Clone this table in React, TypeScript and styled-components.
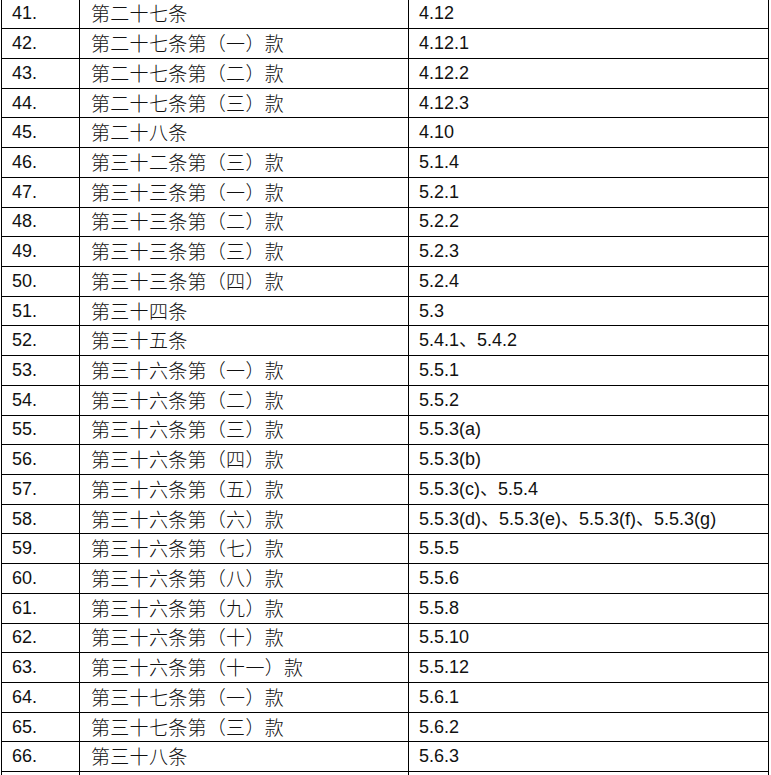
import React from "react";
import styled, { createGlobalStyle } from "styled-components";

const rows: [string, string, string][] = [
  ["41.", "第二十七条", "4.12"],
  ["42.", "第二十七条第（一）款", "4.12.1"],
  ["43.", "第二十七条第（二）款", "4.12.2"],
  ["44.", "第二十七条第（三）款", "4.12.3"],
  ["45.", "第二十八条", "4.10"],
  ["46.", "第三十二条第（三）款", "5.1.4"],
  ["47.", "第三十三条第（一）款", "5.2.1"],
  ["48.", "第三十三条第（二）款", "5.2.2"],
  ["49.", "第三十三条第（三）款", "5.2.3"],
  ["50.", "第三十三条第（四）款", "5.2.4"],
  ["51.", "第三十四条", "5.3"],
  ["52.", "第三十五条", "5.4.1、5.4.2"],
  ["53.", "第三十六条第（一）款", "5.5.1"],
  ["54.", "第三十六条第（二）款", "5.5.2"],
  ["55.", "第三十六条第（三）款", "5.5.3(a)"],
  ["56.", "第三十六条第（四）款", "5.5.3(b)"],
  ["57.", "第三十六条第（五）款", "5.5.3(c)、5.5.4"],
  ["58.", "第三十六条第（六）款", "5.5.3(d)、5.5.3(e)、5.5.3(f)、5.5.3(g)"],
  ["59.", "第三十六条第（七）款", "5.5.5"],
  ["60.", "第三十六条第（八）款", "5.5.6"],
  ["61.", "第三十六条第（九）款", "5.5.8"],
  ["62.", "第三十六条第（十）款", "5.5.10"],
  ["63.", "第三十六条第（十一）款", "5.5.12"],
  ["64.", "第三十七条第（一）款", "5.6.1"],
  ["65.", "第三十七条第（三）款", "5.6.2"],
  ["66.", "第三十八条", "5.6.3"],
];

const GlobalStyle = createGlobalStyle`
  html, body {
    margin: 0;
    padding: 0;
    background: #fff;
    overflow: hidden;
  }
`;

const Page = styled.div`
  width: 771px;
  height: 775px;
  overflow: hidden;
  padding-left: 1px;
  box-sizing: border-box;
`;

const Table = styled.table`
  border-collapse: collapse;
  table-layout: fixed;
  width: 768px;
  margin-top: -1.5px;
  color: #111;
`;

const Row = styled.tr`
  height: 29.72px;
`;

const Cell = styled.td<{ $cjk?: boolean }>`
  border: 1px solid #000;
  padding: 0 0 1px ${(p) => (p.$cjk ? "11px" : "10px")};
  font-family: ${(p) =>
    p.$cjk
      ? `"Noto Sans CJK SC", sans-serif`
      : `"Liberation Sans", "Noto Sans CJK SC", sans-serif`};
  font-size: ${(p) => (p.$cjk ? "19px" : "18px")};
  font-weight: ${(p) => (p.$cjk ? 300 : 400)};
  letter-spacing: ${(p) => (p.$cjk ? "0.3px" : "0")};
  line-height: 22px;
  white-space: nowrap;
  vertical-align: middle;
`;

export default function App() {
  return (
    <Page>
      <GlobalStyle />
      <Table>
        <colgroup>
          <col style={{ width: 78 }} />
          <col style={{ width: 329 }} />
          <col style={{ width: 360 }} />
        </colgroup>
        <tbody>
          {rows.map(([n, art, ref]) => (
            <Row key={n}>
              <Cell>{n}</Cell>
              <Cell $cjk>{art}</Cell>
              <Cell>{ref}</Cell>
            </Row>
          ))}
          <Row>
            <Cell />
            <Cell $cjk />
            <Cell />
          </Row>
        </tbody>
      </Table>
    </Page>
  );
}
